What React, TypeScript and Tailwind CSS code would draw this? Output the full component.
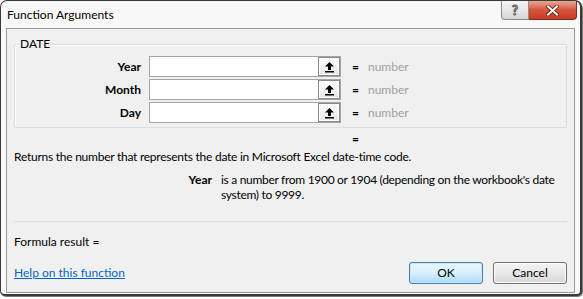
import { ReactNode } from "react";

const font = { fontFamily: 'Lato, "Noto Sans", sans-serif' };

function RefButton() {
  return (
    <div className="flex h-[19px] w-[22px] items-center justify-center border border-[#8a8a8a] bg-gradient-to-b from-[#fdfdfd] to-[#e6e6e6] shadow-[inset_0_0_0_1px_#ffffff]">
      <svg width="11" height="12" viewBox="0 0 11 12">
        <path d="M5.5 1 L10 5.5 L7 5.5 L7 9 L4 9 L4 5.5 L1 5.5 Z" fill="#000" />
        <rect x="1" y="10" width="9" height="1.5" fill="#000" />
      </svg>
    </div>
  );
}

function ArgRow({ label }: { label: string }) {
  return (
    <div className="flex h-[23px] items-center">
      <div className="w-[126px] text-right text-[12px] font-bold text-black">{label}</div>
      <div className="ml-[8px] flex h-[21px] w-[192px] items-center justify-end border border-[#a5a5a5] bg-white">
        <RefButton />
      </div>
      <span className="ml-[11px] text-[12px] font-bold text-black">=</span>
      <span className="ml-[9px] text-[12px] text-[#a0a0a0]">number</span>
    </div>
  );
}

function DialogButton({ children, primary }: { children: ReactNode; primary?: boolean }) {
  return (
    <button
      className={
        "flex h-[22px] w-[74px] items-center justify-center rounded-[3px] border text-[12px] text-black " +
        (primary
          ? "border-[#3c7fb1] bg-gradient-to-b from-[#eaf6fd] via-[#d9f0fc] to-[#a7d9f5] shadow-[inset_0_0_0_1px_#cfe8f7]"
          : "border-[#707070] bg-gradient-to-b from-[#f4f4f4] via-[#e8e8e8] to-[#d6d6d6] shadow-[inset_0_0_0_1px_#fbfbfb]")
      }
      style={font}
    >
      {children}
    </button>
  );
}

export default function App() {
  return (
    <div className="h-[299px] w-[583px] overflow-hidden bg-white" style={font}>
      <div className="flex h-[296px] w-[582px] flex-col rounded-t-[7px] rounded-b-[5px] border border-r-[2px] border-b-[2px] border-[#3a3a3a] bg-[#f8f8f8] shadow-[1px_1px_0_#7a7a7a]">
        {/* Title bar */}
        <div className="flex h-[27px] items-start">
          <div className="pl-[6px] pt-[6px] text-[12px] leading-[16px] text-black">Function Arguments</div>
          <div className="ml-auto mr-[3px] flex">
            <div className="flex h-[19px] w-[28px] items-center justify-center rounded-bl-[4px] border border-t-0 border-[#8c8c8c] bg-gradient-to-b from-[#f6f6f6] to-[#d6d6d6]">
              <span className="text-[13px] font-bold leading-none text-white [-webkit-text-stroke:1px_#555]">?</span>
            </div>
            <div className="flex h-[19px] w-[48px] items-center justify-center rounded-br-[4px] border border-t-0 border-l-0 border-[#7a2c22] bg-gradient-to-b from-[#e8a898] via-[#d6543c] to-[#c83a22]">
              <svg width="13" height="11" viewBox="0 0 13 11">
                <path d="M2 1.5 L11 9.5 M11 1.5 L2 9.5" stroke="#5a1a10" strokeWidth="3.6" strokeLinecap="square" />
                <path d="M2 1.5 L11 9.5 M11 1.5 L2 9.5" stroke="#ffffff" strokeWidth="2" strokeLinecap="square" />
              </svg>
            </div>
          </div>
        </div>

        {/* Body */}
        <div className="mx-[5px] flex h-[265px] flex-col border border-[#9a9a9a] bg-[#f0f0f0] px-[7px]">
          {/* Group box */}
          <div className="relative mt-[15px] h-[84px] rounded-[2px] border border-[#d5dfe5] shadow-[inset_1px_1px_0_#ffffff]">
            <span className="absolute left-[4px] top-[-9px] bg-[#f0f0f0] px-[1px] text-[12px] leading-[16px] text-black">DATE</span>
            <div className="flex flex-col pt-[10px]">
              <ArgRow label="Year" />
              <ArgRow label="Month" />
              <ArgRow label="Day" />
            </div>
          </div>

          <div className="mt-[3px] h-[16px] pl-[338px] text-[12px] font-bold leading-[16px] text-black">=</div>
          <div className="mt-[2px] text-[12px] leading-[16px] tracking-[-0.25px] text-black">
            Returns the number that represents the date in Microsoft Excel date-time code.
          </div>
          <div className="mt-[7px] flex text-[12px] leading-[15px] text-black">
            <div className="w-[198px] text-right font-bold">Year</div>
            <div className="ml-[9px] whitespace-nowrap tracking-[-0.3px]">
              is a number from 1900 or 1904 (depending on the workbook's date
              <br />
              system) to 9999.
            </div>
          </div>

          <div className="mt-[19px] h-px bg-[#d5dfe5]" />
          <div className="mt-[12px] text-[12px] leading-[16px] text-black">Formula result =</div>
          <div className="mt-[12px] flex items-center">
            <a className="text-[12px] text-[#0066cc] underline">Help on this function</a>
            <div className="ml-auto flex gap-[10px]">
              <DialogButton primary>OK</DialogButton>
              <DialogButton>Cancel</DialogButton>
            </div>
          </div>
        </div>
      </div>
    </div>
  );
}
